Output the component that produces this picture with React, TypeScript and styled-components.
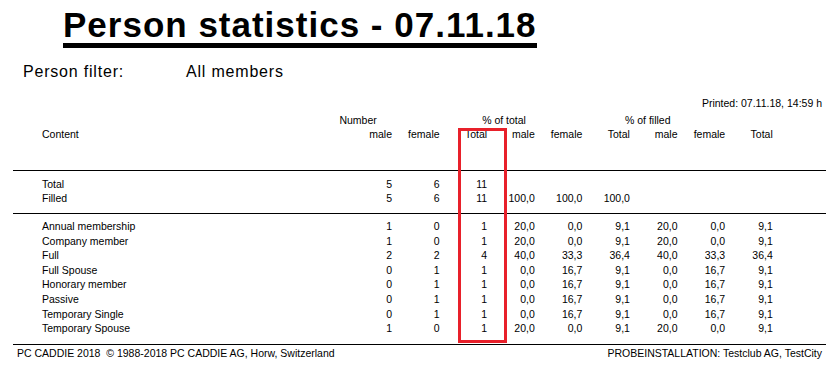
import React from "react"
import styled, { createGlobalStyle } from "styled-components"

const GlobalStyle = createGlobalStyle`
  html, body {
    margin: 0;
    padding: 0;
    background: #ffffff;
  }
  body {
    font-family: "Liberation Sans", Arial, sans-serif;
    color: #000000;
  }
`

const Page = styled.div`
  position: relative;
  width: 840px;
  height: 375px;
  overflow: hidden;
  background: #ffffff;
`

const TitleRow = styled.div`
  padding: 6px 0 0 63px;
  height: 48px;
  box-sizing: border-box;
`

const Title = styled.h1`
  display: inline-block;
  margin: 0;
  font-size: 35px;
  line-height: 37px;
  font-weight: bold;
  letter-spacing: 1px;
  border-bottom: 5px solid #000;
  white-space: nowrap;
`

const FilterRow = styled.div`
  display: grid;
  grid-template-columns: 163px auto;
  margin-top: 15px;
  padding-left: 23px;
  font-size: 16px;
  line-height: 18px;
  letter-spacing: 0.8px;
`

const Printed = styled.div`
  margin-top: 15px;
  padding-right: 18px;
  text-align: right;
  font-size: 10.5px;
  line-height: 14px;
`

const Table = styled.div`
  margin: 3px 0 0 13px;
  width: 813px;
  font-size: 10.5px;
`

const Row = styled.div`
  display: grid;
  grid-template-columns: 302.4px repeat(9, 47.6px);
  padding-left: 29px;
  height: ${(p: { $h?: number }) => p.$h ?? 14}px;
  line-height: ${(p: { $h?: number }) => p.$h ?? 14}px;
  white-space: nowrap;
`

const Cell = styled.div`
  text-align: right;
`

const Label = styled.div`
  text-align: left;
`

const Group = styled.div`
  grid-column: span 3;
  margin-left: -5px;
  text-align: left;
`

const Head = styled.div`
  height: 57px;
  border-bottom: 1px solid #000;
`

const Section = styled.div<{ $top: number; $bottom: number }>`
  padding-top: ${(p) => p.$top}px;
  padding-bottom: ${(p) => p.$bottom}px;
  border-bottom: 1px solid #000;
`

const Footer = styled.div`
  display: flex;
  justify-content: space-between;
  padding: 1px 4px 0 4px;
  font-size: 10.5px;
  line-height: 14px;
  white-space: nowrap;
`

const Marker = styled.div`
  position: absolute;
  left: 458px;
  top: 128px;
  width: 49px;
  height: 215px;
  box-sizing: border-box;
  border: 3px solid #e8202a;
`

const totals: [string, string[]][] = [
  ["Total", ["5", "6", "11"]],
  ["Filled", ["5", "6", "11", "100,0", "100,0", "100,0"]],
]

const kinds: [string, string[]][] = [
  ["Annual membership", ["1", "0", "1", "20,0", "0,0", "9,1", "20,0", "0,0", "9,1"]],
  ["Company member", ["1", "0", "1", "20,0", "0,0", "9,1", "20,0", "0,0", "9,1"]],
  ["Full", ["2", "2", "4", "40,0", "33,3", "36,4", "40,0", "33,3", "36,4"]],
  ["Full Spouse", ["0", "1", "1", "0,0", "16,7", "9,1", "0,0", "16,7", "9,1"]],
  ["Honorary member", ["0", "1", "1", "0,0", "16,7", "9,1", "0,0", "16,7", "9,1"]],
  ["Passive", ["0", "1", "1", "0,0", "16,7", "9,1", "0,0", "16,7", "9,1"]],
  ["Temporary Single", ["0", "1", "1", "0,0", "16,7", "9,1", "0,0", "16,7", "9,1"]],
  ["Temporary Spouse", ["1", "0", "1", "20,0", "0,0", "9,1", "20,0", "0,0", "9,1"]],
]

const sub = ["male", "female", "Total", "male", "female", "Total", "male", "female", "Total"]

const DataRow: React.FC<{ label: string; values: string[]; h?: number }> = ({ label, values, h }) => (
  <Row $h={h}>
    <Label>{label}</Label>
    {values.map((v, i) => (
      <Cell key={i}>{v}</Cell>
    ))}
  </Row>
)

export default function App() {
  return (
    <Page>
      <GlobalStyle />
      <TitleRow>
        <Title>Person statistics - 07.11.18</Title>
      </TitleRow>
      <FilterRow>
        <span>Person filter:</span>
        <span>All members</span>
      </FilterRow>
      <Printed>Printed: 07.11.18, 14:59 h</Printed>
      <Table>
        <Head>
          <Row>
            <Label />
            <Group>Number</Group>
            <Group>% of total</Group>
            <Group>% of filled</Group>
          </Row>
          <Row>
            <Label>Content</Label>
            {sub.map((s, i) => (
              <Cell key={i}>{s}</Cell>
            ))}
          </Row>
        </Head>
        <Section $top={6} $bottom={8}>
          {totals.map(([l, v]) => (
            <DataRow key={l} label={l} values={v} />
          ))}
        </Section>
        <Section $top={5} $bottom={8}>
          {kinds.map(([l, v]) => (
            <DataRow key={l} label={l} values={v} h={14.6} />
          ))}
        </Section>
        <Footer>
          <span>PC CADDIE 2018&nbsp;&nbsp;© 1988-2018 PC CADDIE AG, Horw, Switzerland</span>
          <span>PROBEINSTALLATION: Testclub AG, TestCity</span>
        </Footer>
      </Table>
      <Marker />
    </Page>
  )
}
